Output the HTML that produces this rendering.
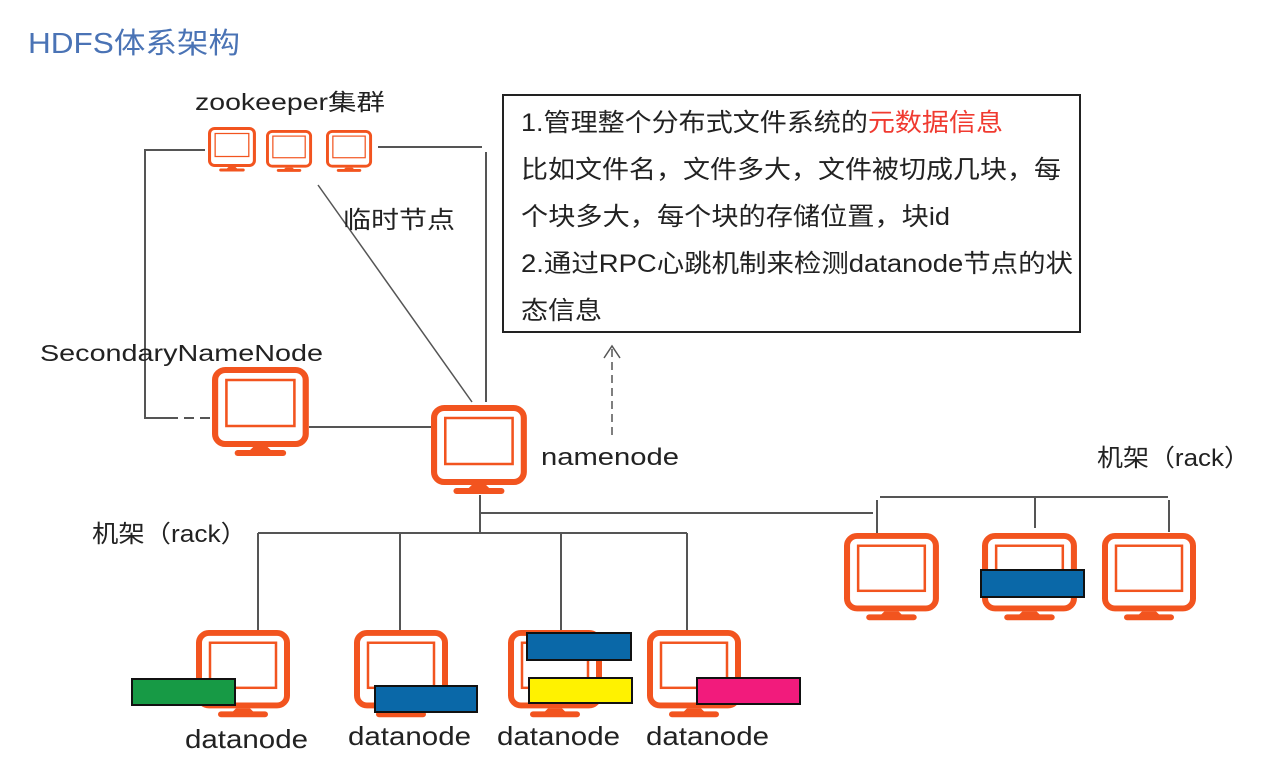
<!DOCTYPE html>
<html><head><meta charset="utf-8"><style>
html,body{margin:0;padding:0;background:#fff;}
svg{display:block;font-family:"Liberation Sans","Noto Sans CJK SC",sans-serif;}
</style></head><body>
<svg width="1281" height="764" viewBox="0 0 1281 764" xmlns="http://www.w3.org/2000/svg">
<defs>
<g id="mon">
<rect x="3" y="3" width="88" height="74" rx="10" fill="#fff" stroke="#f2541f" stroke-width="6"/>
<rect x="14" y="13" width="66" height="46" fill="none" stroke="#f2541f" stroke-width="2.5"/>
<polygon points="40,80 54,80 58,84 36,84" fill="#f2541f"/>
<rect x="22" y="83" width="50" height="6" rx="3" fill="#f2541f"/>
</g>
</defs>
<rect width="1281" height="764" fill="#fff"/>
<text x="28" y="53" font-size="29" fill="#4a73b5" textLength="212" lengthAdjust="spacingAndGlyphs">HDFS体系架构</text>
<text x="195" y="110" font-size="23" fill="#222" textLength="190" lengthAdjust="spacingAndGlyphs">zookeeper集群</text>
<g stroke="#555" stroke-width="2" fill="none">
<polyline points="205,150 145,150 145,418 168,418"/>
<line x1="168" y1="418" x2="213" y2="418" stroke-dasharray="10,6"/>
<polyline points="378,147 482,147"/>
<line x1="486" y1="152" x2="486" y2="402"/>
<line x1="318" y1="185" x2="472" y2="402" stroke-width="1.5"/>
<line x1="309" y1="427" x2="432" y2="427"/>
<polyline points="480,495 480,533"/>
<polyline points="480,513 873,513"/>
<polyline points="877,500 877,535"/>
<polyline points="880,497 1168,497"/>
<line x1="1035" y1="497" x2="1035" y2="528"/>
<line x1="1169" y1="500" x2="1169" y2="532"/>
<line x1="258" y1="533" x2="687" y2="533"/>
<line x1="258" y1="533" x2="258" y2="630"/>
<line x1="400" y1="533" x2="400" y2="630"/>
<line x1="561" y1="533" x2="561" y2="630"/>
<line x1="687" y1="533" x2="687" y2="630"/>
<line x1="612" y1="435" x2="612" y2="348" stroke-dasharray="8,5" stroke-width="1.5"/>
<polyline points="604,358 612,346 620,358" stroke-width="1.5"/>
</g>
<g transform="translate(208,127) scale(0.51,0.5)"><use href="#mon"/></g>
<g transform="translate(266,130) scale(0.49,0.47)"><use href="#mon"/></g>
<g transform="translate(326,130) scale(0.49,0.47)"><use href="#mon"/></g>
<text x="343" y="228" font-size="24" fill="#222" textLength="112" lengthAdjust="spacingAndGlyphs">临时节点</text>
<text x="40" y="361" font-size="23" fill="#222" textLength="283" lengthAdjust="spacingAndGlyphs">SecondaryNameNode</text>
<g transform="translate(212,367) scale(1.03,1)"><use href="#mon"/></g>
<g transform="translate(431,405) scale(1.02,1)"><use href="#mon"/></g>
<text x="541" y="465" font-size="24" fill="#222" textLength="138" lengthAdjust="spacingAndGlyphs">namenode</text>
<text x="1097" y="466" font-size="24" fill="#222" textLength="153" lengthAdjust="spacingAndGlyphs">机架（rack）</text>
<text x="92" y="542" font-size="24" fill="#222" textLength="155" lengthAdjust="spacingAndGlyphs">机架（rack）</text>
<g transform="translate(844,533) scale(1.01,0.98)"><use href="#mon"/></g>
<g transform="translate(982,533) scale(1.01,0.98)"><use href="#mon"/></g>
<g transform="translate(1102,533) scale(1.0,0.98)"><use href="#mon"/></g>
<g transform="translate(196,630) scale(1.0,0.98)"><use href="#mon"/></g>
<g transform="translate(354,630) scale(1.0,0.98)"><use href="#mon"/></g>
<g transform="translate(508,630) scale(1.0,0.98)"><use href="#mon"/></g>
<g transform="translate(647,630) scale(1.0,0.98)"><use href="#mon"/></g>
<g stroke="#111" stroke-width="2">
<rect x="132" y="679" width="103" height="26" fill="#179a45"/>
<rect x="375" y="686" width="102" height="26" fill="#0a68a8"/>
<rect x="527" y="633" width="104" height="27" fill="#0a68a8"/>
<rect x="529" y="678" width="103" height="25" fill="#fff200"/>
<rect x="697" y="678" width="103" height="26" fill="#f21b7c"/>
<rect x="981" y="570" width="103" height="27" fill="#0a68a8"/>
</g>
<g font-size="26" fill="#222">
<text x="185" y="748" textLength="123" lengthAdjust="spacingAndGlyphs">datanode</text>
<text x="348" y="745" textLength="123" lengthAdjust="spacingAndGlyphs">datanode</text>
<text x="497" y="745" textLength="123" lengthAdjust="spacingAndGlyphs">datanode</text>
<text x="646" y="745" textLength="123" lengthAdjust="spacingAndGlyphs">datanode</text>
</g>
<rect x="503" y="95" width="577" height="237" fill="none" stroke="#222" stroke-width="2"/>
<g font-size="25" fill="#222">
<text x="521" y="131" textLength="482" lengthAdjust="spacingAndGlyphs">1.管理整个分布式文件系统的<tspan fill="#f03a30">元数据信息</tspan></text>
<text x="521" y="178" textLength="540" lengthAdjust="spacingAndGlyphs">比如文件名，文件多大，文件被切成几块，每</text>
<text x="521" y="225" textLength="429" lengthAdjust="spacingAndGlyphs">个块多大，每个块的存储位置，块id</text>
<text x="521" y="272" textLength="552" lengthAdjust="spacingAndGlyphs">2.通过RPC心跳机制来检测datanode节点的状</text>
<text x="521" y="319" textLength="81" lengthAdjust="spacingAndGlyphs">态信息</text>
</g>
</svg>
</body></html>
